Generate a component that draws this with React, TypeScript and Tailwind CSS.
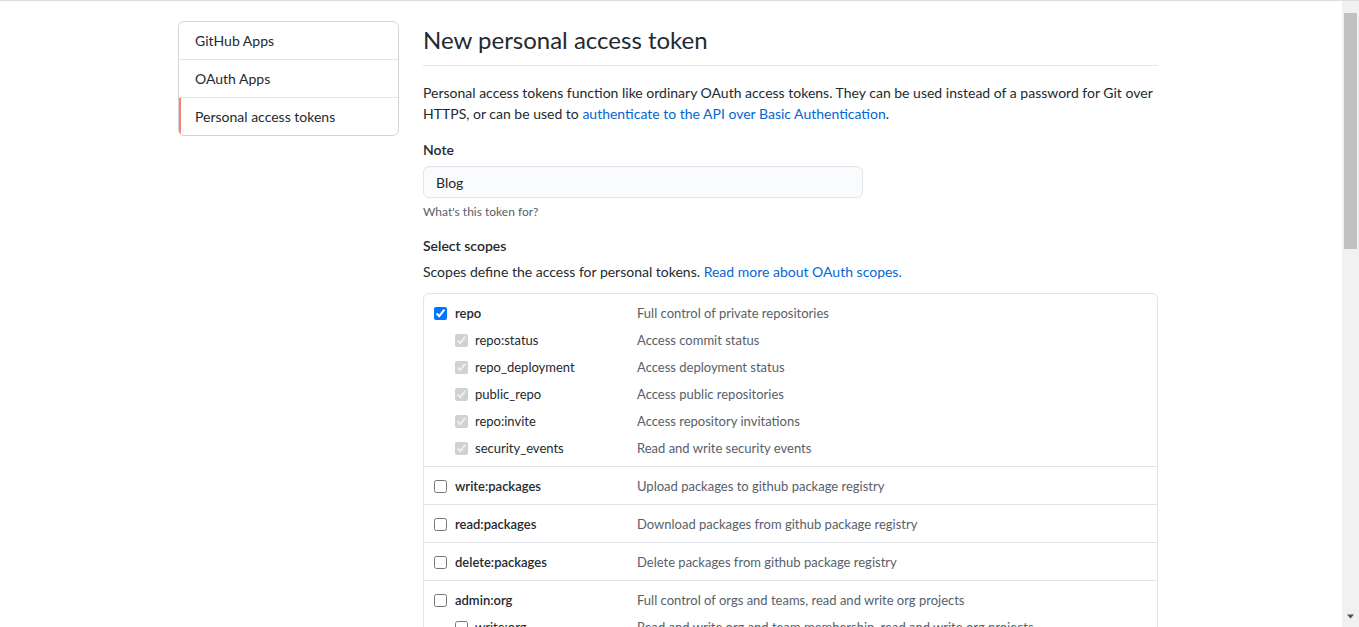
import React from "react";

type Scope = {
  name: string;
  desc: string;
  checked?: boolean;
  children?: { name: string; desc: string; checked?: boolean }[];
};

const scopes: Scope[] = [
  {
    name: "repo",
    desc: "Full control of private repositories",
    checked: true,
    children: [
      { name: "repo:status", desc: "Access commit status", checked: true },
      { name: "repo_deployment", desc: "Access deployment status", checked: true },
      { name: "public_repo", desc: "Access public repositories", checked: true },
      { name: "repo:invite", desc: "Access repository invitations", checked: true },
      { name: "security_events", desc: "Read and write security events", checked: true },
    ],
  },
  { name: "write:packages", desc: "Upload packages to github package registry" },
  { name: "read:packages", desc: "Download packages from github package registry" },
  { name: "delete:packages", desc: "Delete packages from github package registry" },
  {
    name: "admin:org",
    desc: "Full control of orgs and teams, read and write org projects",
    children: [
      { name: "write:org", desc: "Read and write org and team membership, read and write org projects" },
      { name: "read:org", desc: "Read org and team membership, read org projects" },
    ],
  },
];

const menu = ["GitHub Apps", "OAuth Apps", "Personal access tokens"];

const Sidebar = () => (
  <nav className="w-[221px] shrink-0 self-start border border-[#d1d5da] rounded-[6px] overflow-hidden">
    {menu.map((item, i) => (
      <div
        key={item}
        className={
          i === menu.length - 1
            ? "h-[37px] flex items-center px-[16px] text-[14px] shadow-[inset_2px_0_0_#f9826c]"
            : "h-[38px] flex items-center px-[16px] text-[14px] border-b border-[#e1e4e8]"
        }
      >
        {item}
      </div>
    ))}
  </nav>
);

const ScopeGroup = ({ scope, last }: { scope: Scope; last: boolean }) => (
  <div className={last ? "pt-[6px] pb-[4px]" : "pt-[6px] pb-[4px] border-b border-[#e1e4e8]"}>
    <div className="flex items-center h-[27px] pl-[10px]">
      <div className="w-[203px] flex items-center gap-[8px]">
        <input type="checkbox" defaultChecked={scope.checked} className="w-[13px] h-[13px] m-0" />
        <span className="font-semibold text-[13px]">{scope.name}</span>
      </div>
      <span className="text-[13px] text-[#586069]">{scope.desc}</span>
    </div>
    {scope.children?.map((c) => (
      <div key={c.name} className="flex items-center h-[27px] pl-[10px]">
        <div className="w-[203px] flex items-center gap-[7px] pl-[21px]">
          <input
            type="checkbox"
            defaultChecked={c.checked}
            disabled={c.checked}
            className="w-[13px] h-[13px] m-0"
          />
          <span className="text-[13px]">{c.name}</span>
        </div>
        <span className="text-[13px] text-[#586069]">{c.desc}</span>
      </div>
    ))}
  </div>
);

const Scrollbar = () => (
  <div className="w-[17px] shrink-0 bg-[#f1f1f1] flex flex-col items-center">
    <div className="h-[12px]" />
    <div className="w-[13px] h-[236px] bg-[#c1c1c1]" />
    <div className="flex-1" />
    <svg width="9" height="9" viewBox="0 0 9 9" className="mb-[6px]">
      <path d="M1 2.5 L8 2.5 L4.5 6.5 Z" fill="#505050" />
    </svg>
  </div>
);

export default function App() {
  return (
    <div className="h-[627px] w-full flex overflow-hidden bg-white border-t border-[#dcdcdc] font-['Lato','Liberation_Sans',sans-serif] text-[#24292e]">
      <div className="flex-1 flex gap-[24px] pl-[178px] pt-[20px] overflow-hidden">
        <Sidebar />
        <main className="w-[735px] shrink-0">
          <h1 className="text-[24px] font-normal leading-[38px] pb-[6px] border-b border-[#e1e4e8]">
            New personal access token
          </h1>
          <p className="mt-[16px] text-[14px] leading-[21px]">
            Personal access tokens function like ordinary OAuth access tokens. They can be used instead of a password for Git over
            <br />
            HTTPS, or can be used to{" "}
            <a className="text-[#0366d6]">authenticate to the API over Basic Authentication</a>.
          </p>
          <div className="mt-[15px] text-[14px] leading-[21px] font-semibold">Note</div>
          <div className="mt-[6px] w-[440px] h-[32px] flex items-center px-[12px] text-[14px] bg-[#fafbfc] border border-[#e1e4e8] rounded-[6px] shadow-[inset_0_1px_0_rgba(225,228,232,0.2)]">
            Blog
          </div>
          <div className="mt-[5px] text-[12px] leading-[18px] text-[#586069]">What's this token for?</div>
          <div className="mt-[14px] text-[14px] leading-[21px] font-semibold">Select scopes</div>
          <p className="mt-[5px] text-[14px] leading-[21px]">
            Scopes define the access for personal tokens.{" "}
            <a className="text-[#0366d6]">Read more about OAuth scopes.</a>
          </p>
          <div className="mt-[11px] border border-[#e1e4e8] rounded-[6px]">
            {scopes.map((s, i) => (
              <ScopeGroup key={s.name} scope={s} last={i === scopes.length - 1} />
            ))}
          </div>
        </main>
      </div>
      <Scrollbar />
    </div>
  );
}
